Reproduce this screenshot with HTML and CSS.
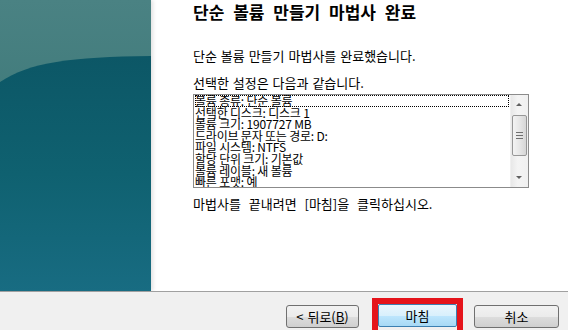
FILE: index.html
```html
<!DOCTYPE html>
<html>
<head>
  <title>단순 볼륨 만들기 마법사</title>
  <link rel="stylesheet" href="styles.css">
</head>
<body>

  <div class="wizard">
    <div class="main">
      <!-- Side art -->
      <div class="side">
        <svg width="151" height="291" viewBox="0 0 151 291">
          <defs>
            <linearGradient id="topFill" x1="0" y1="0" x2="0" y2="1">
              <stop offset="0" stop-color="#4a8283"/>
              <stop offset="1" stop-color="#31706f"/>
            </linearGradient>
            <linearGradient id="lowFill" x1="0" y1="0" x2="0" y2="1">
              <stop offset="0" stop-color="#0c5766"/>
              <stop offset="0.5" stop-color="#0f6170"/>
              <stop offset="1" stop-color="#186c82"/>
            </linearGradient>
          </defs>
          <rect width="151" height="291" fill="url(#topFill)"/>
          <path d="M0 82 C 30 62, 70 57, 151 56 L151 291 L0 291 Z" fill="url(#lowFill)"/>
        </svg>
      </div>

      <!-- Page text -->
      <div class="content">
        <h1 class="title">단순 볼륨 만들기 마법사 완료</h1>
        <p class="done">단순 볼륨 만들기 마법사를 완료했습니다.</p>
        <p class="label">선택한 설정은 다음과 같습니다.</p>

        <div class="listbox">
          <div class="lines">
            <div class="line focused">볼륨 종류: 단순 볼륨</div>
            <div class="line">선택한 디스크: 디스크 1</div>
            <div class="line">볼륨 크기: 1907727 MB</div>
            <div class="line">드라이브 문자 또는 경로: D:</div>
            <div class="line">파일 시스템: NTFS</div>
            <div class="line">할당 단위 크기: 기본값</div>
            <div class="line">볼륨 레이블: 새 볼륨</div>
            <div class="line">빠른 포맷: 예</div>
          </div>
          <div class="scrollbar">
            <div class="arrow up"></div>
            <div class="track">
              <div class="thumb">
                <span class="grip"></span>
                <span class="grip"></span>
                <span class="grip"></span>
              </div>
            </div>
            <div class="arrow down"></div>
          </div>
        </div>

        <p class="hint">마법사를 끝내려면 [마침]을 클릭하십시오.</p>
      </div>
    </div>

    <!-- Buttons -->
    <div class="buttons">
      <button class="btn back">&lt; 뒤로(<u>B</u>)</button>
      <div class="mark">
        <button class="btn finish">마침</button>
      </div>
      <button class="btn cancel">취소</button>
    </div>
  </div>

</body>
</html>
```

FILE: styles.css
```css
body {
  margin: 0;
  background: #ffffff;
  font-family: "Noto Sans CJK KR", "Noto Sans", sans-serif;
  color: #000000;
  overflow: hidden;
}

.wizard {
  width: 568px;
  height: 330px;
  display: flex;
  flex-direction: column;
}

.main {
  height: 291px;
  display: flex;
}

.side {
  width: 151px;
  height: 291px;
  box-shadow: 2px 0 4px rgba(0, 0, 0, 0.12);
}

.side svg {
  display: block;
}

.content {
  padding-left: 42px;
  padding-top: 1px;
}

.title {
  margin: 0;
  font-size: 17px;
  font-weight: bold;
  line-height: 21px;
  word-spacing: 5px;
  white-space: nowrap;
}

.done,
.label,
.hint {
  margin: 0;
  font-size: 13px;
  line-height: 16px;
  word-spacing: 1px;
}

.done {
  margin-top: 26px;
}

.label {
  margin-top: 11px;
}

.listbox {
  width: 334px;
  height: 92px;
  border: 1px solid #8b8b8b;
  display: flex;
  margin-top: 3px;
}

.lines {
  flex: 1;
  overflow: hidden;
  padding-left: 1px;
}

.line {
  font-size: 12px;
  line-height: 11.6px;
  height: 11.6px;
  white-space: nowrap;
  letter-spacing: -0.2px;
}

.focused {
  outline: 1px dotted #000000;
  outline-offset: -1px;
  margin-right: 1px;
}

.scrollbar {
  width: 17px;
  display: flex;
  flex-direction: column;
  background: linear-gradient(to right, #e8e8e8, #f4f4f4 40%, #f0f0f0);
  border-left: 1px solid #f0f0f0;
}

.arrow {
  height: 17px;
  position: relative;
}

.arrow::after {
  content: "";
  position: absolute;
  left: 5px;
  width: 0;
  height: 0;
  border-left: 3px solid transparent;
  border-right: 3px solid transparent;
}

.up::after {
  top: 8px;
  border-bottom: 3px solid #606060;
}

.down::after {
  top: 6px;
  border-top: 3px solid #606060;
}

.track {
  flex: 1;
  padding-top: 3px;
}

.thumb {
  margin: 0 1px;
  height: 39px;
  border: 1px solid #979797;
  border-radius: 2px;
  background: linear-gradient(to right, #f3f3f3, #e6e6e6 50%, #d6d6d6);
  display: flex;
  flex-direction: column;
  align-items: center;
  justify-content: center;
  gap: 2px;
}

.grip {
  width: 7px;
  height: 1px;
  background: #6f6f6f;
}

.hint {
  margin-top: 8px;
  word-spacing: 5px;
}

.buttons {
  flex: 1;
  background: #f0f0f0;
  border-top: 1px solid #a0a0a0;
  display: flex;
  align-items: flex-start;
  padding-top: 13px;
  padding-left: 286px;
}

.btn {
  height: 23px;
  padding: 0;
  border: 1px solid #707070;
  border-radius: 3px;
  background: linear-gradient(to bottom, #f2f2f2, #ebebeb 50%, #dddddd 51%, #cfcfcf);
  font-family: "Noto Sans CJK KR", "Noto Sans", sans-serif;
  font-size: 13px;
  line-height: 20px;
  color: #000000;
  word-spacing: 1px;
}

.back {
  width: 73px;
}

.mark {
  margin-top: -7px;
  margin-left: 13px;
  border: 6px solid #e5141b;
  height: 30px;
}

.finish {
  display: block;
  width: 79px;
  border-color: #3c7fb1;
  border-radius: 2px;
  background: linear-gradient(to bottom, #eaf6fd, #d9f0fc 50%, #bee6fd 51%, #a7d9f5);
}

.cancel {
  width: 85px;
  margin-left: 11px;
}
```
